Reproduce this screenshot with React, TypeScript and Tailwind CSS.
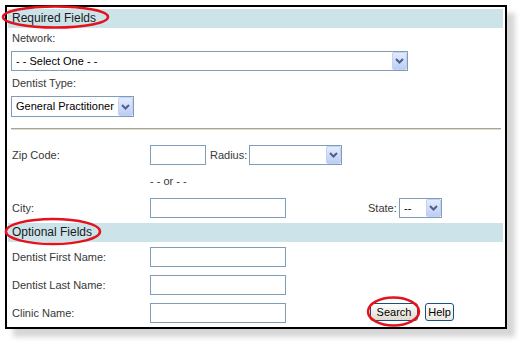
import React from 'react'

const font = { fontFamily: '"Liberation Sans", Arial, sans-serif' }

const Chevron = () => (
  <svg width="9" height="6" viewBox="0 0 9 6">
    <path d="M1 1l3.5 3.5L8 1" stroke="#4d6185" strokeWidth="2" fill="none" />
  </svg>
)

type DropdownProps = {
  value: string
  className: string
}

const Dropdown: React.FC<DropdownProps> = ({ value, className }) => (
  <div className={`flex h-[20px] border border-[#7f9db9] bg-white ${className}`}>
    <div className="flex-1 overflow-hidden whitespace-nowrap pl-[4px] text-[11px] leading-[18px] text-black">
      {value}
    </div>
    <div className="flex h-full w-[15px] items-center justify-center rounded-[2px] border border-[#c3d1f2] bg-gradient-to-b from-[#e3ebfe] to-[#bccdf7]">
      <Chevron />
    </div>
  </div>
)

const TextBox = ({ className }: { className: string }) => (
  <input className={`h-[20px] border border-[#7f9db9] bg-white outline-none ${className}`} />
)

const Label = ({ children }: { children: React.ReactNode }) => (
  <div className="w-[143px] shrink-0 pl-[5px] text-[11px] leading-[13px] text-[#383838]">{children}</div>
)

const Band = ({ children, className }: { children: string; className: string }) => (
  <div className={`ml-px h-[19px] w-[495px] bg-[#cce3ea] pl-[4px] text-[12px] leading-[19px] text-[#1a1a1a] ${className}`}>
    {children}
  </div>
)

const XpButton = ({ children, className }: { children: string; className: string }) => (
  <button
    className={`flex h-[18px] items-center justify-center rounded-[3px] border border-[#1d4f7e] text-[11px] leading-[13px] text-black ${className}`}
  >
    {children}
  </button>
)

export default function App() {
  return (
    <div className="relative h-[344px] w-[522px] overflow-hidden bg-white" style={font}>
      <div className="pl-[5px] pt-[5px]">
        <div className="h-[324px] w-[502px] border-2 border-black bg-white shadow-[8px_8px_5px_rgba(0,0,0,0.16)]">
          <Band className="mt-[2px]">Required Fields</Band>

          <div className="mt-[4px] pl-[5px] text-[11px] leading-[13px] text-[#383838]">Network:</div>
          <Dropdown value="- - Select One - -" className="ml-[4px] mt-[6px] w-[397px]" />

          <div className="mt-[6px] pl-[5px] text-[11px] leading-[13px] text-[#383838]">Dentist Type:</div>
          <Dropdown value="General Practitioner" className="ml-[4px] mt-[6px] h-[21px] w-[123px]" />

          <div className="ml-[4px] mt-[11px] h-[2px] w-[490px] border-t border-b border-t-[#aaa590] border-b-[#dedbcf]" />

          <div className="mt-[15px] flex h-[20px] items-center">
            <Label>Zip Code:</Label>
            <TextBox className="w-[56px]" />
            <span className="w-[43px] pl-[4px] text-[11px] text-[#383838]">Radius:</span>
            <Dropdown value="" className="w-[93px]" />
          </div>

          <div className="flex h-[33px] items-center">
            <div className="w-[143px] shrink-0" />
            <span className="text-[11px] leading-[13px] text-[#383838]">- - or - -</span>
          </div>

          <div className="flex h-[20px] items-center">
            <Label>City:</Label>
            <TextBox className="w-[136px]" />
            <span className="ml-[82px] w-[31px] text-[11px] text-[#383838]">State:</span>
            <Dropdown value="--" className="w-[43px]" />
          </div>

          <Band className="mt-[5px]">Optional Fields</Band>

          <div className="mt-[5px] flex h-[20px] items-center">
            <Label>Dentist First Name:</Label>
            <TextBox className="w-[136px]" />
          </div>
          <div className="mt-[8px] flex h-[20px] items-center">
            <Label>Dentist Last Name:</Label>
            <TextBox className="w-[136px]" />
          </div>
          <div className="mt-[8px] flex h-[20px] items-start">
            <div className="flex h-[20px] items-center">
              <Label>Clinic Name:</Label>
            </div>
            <TextBox className="w-[136px]" />
            <XpButton className="ml-[84px] w-[48px] bg-gradient-to-b from-[#ffffff] to-[#dedbd1]">Search</XpButton>
            <XpButton className="ml-[7px] w-[29px] bg-gradient-to-b from-[#ffffff] to-[#ebe9e1]">Help</XpButton>
          </div>
        </div>
      </div>

      {/* red annotation rings drawn over the form */}
      <svg className="pointer-events-none absolute left-0 top-0" width="522" height="344">
        <ellipse cx="55.5" cy="17" rx="52.5" ry="10.5" fill="none" stroke="#e3121c" strokeWidth="2.5" />
        <ellipse cx="53" cy="231.5" rx="47" ry="12.5" fill="none" stroke="#e3121c" strokeWidth="2.5" />
        <ellipse cx="393.5" cy="311.5" rx="25.5" ry="14" fill="none" stroke="#e3121c" strokeWidth="2.5" />
      </svg>
    </div>
  )
}
